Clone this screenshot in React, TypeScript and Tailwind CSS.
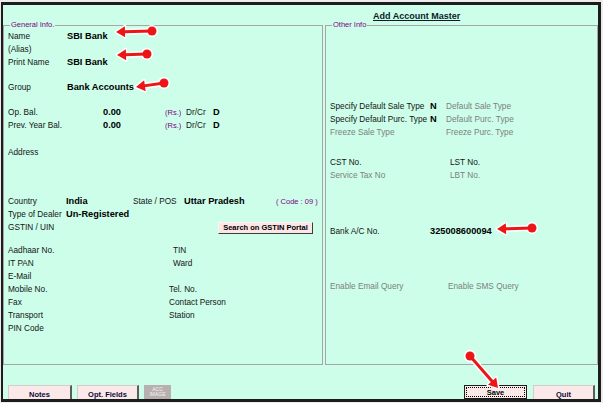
import React from 'react';

const L = 'text-[8.25px] leading-[13px] text-[#141414] whitespace-nowrap';
const G = 'text-[8.25px] leading-[13px] text-[#7e7e7e] whitespace-nowrap';
const V = 'text-[9.25px] leading-[13px] font-bold text-black whitespace-nowrap';
const P = 'text-[7.5px] leading-[13px] text-[#800080] whitespace-nowrap';

const Row: React.FC<{ className?: string; children: React.ReactNode }> = ({ className = '', children }) => (
  <div className={`flex h-[13px] items-center ${className}`}>{children}</div>
);

interface ArrowProps {
  tx: number;
  ty: number;
  cx: number;
  cy: number;
}

// red pointer arrow with white outline, tail is a dot
const Arrow: React.FC<ArrowProps> = ({ tx, ty, cx, cy }) => {
  const dx = tx - cx;
  const dy = ty - cy;
  const len = Math.hypot(dx, dy);
  const ux = dx / len;
  const uy = dy / len;
  const bx = tx - ux * 9;
  const by = ty - uy * 9;
  const px = -uy;
  const py = ux;
  const pts = `${tx},${ty} ${bx + px * 5.5},${by + py * 5.5} ${bx - px * 5.5},${by - py * 5.5}`;
  return (
    <g>
      <line x1={cx} y1={cy} x2={bx} y2={by} stroke="white" strokeWidth={6} strokeLinecap="round" />
      <polygon points={pts} fill="white" stroke="white" strokeWidth={3} strokeLinejoin="round" />
      <circle cx={cx} cy={cy} r={6} fill="white" />
      <line x1={cx} y1={cy} x2={bx + ux} y2={by + uy} stroke="#ec1616" strokeWidth={3} />
      <polygon points={pts} fill="#ec1616" />
      <circle cx={cx} cy={cy} r={4.5} fill="#ec1616" />
    </g>
  );
};

const PinkButton: React.FC<{ w: string; children: React.ReactNode }> = ({ w, children }) => (
  <div
    className={`${w} h-[14px] bg-[#fbe8e8] border-t border-l border-[#d6cccc] border-r-2 border-r-[#5c5c5c] pt-[3px] text-center text-[7.5px] font-bold leading-[11px] text-[#0b0b3c]`}
  >
    {children}
  </div>
);

const App: React.FC = () => {
  return (
    <div className="relative w-[603px] h-[403px] overflow-hidden bg-[#ececec] pt-[2px] pl-[1px] pr-[2px] pb-[1px] font-['Liberation_Sans',Arial,sans-serif]">
      <div className="h-full flex flex-col bg-[#ccfeea] border-t-[3px] border-l-[2px] border-r-[3px] border-b-[3px] border-[#1c1c1c]">
        <div className="grid grid-cols-[320px_273px] grid-rows-[15px_345px] gap-x-[2px]">
          <div />
          <div className="pl-[48px]">
            <div className="pt-[6px] text-[9px] font-bold leading-[11px] text-[#0c1c28] underline">Add Account Master</div>
          </div>

          {/* General Info */}
          <fieldset className="h-[345px] min-w-0 border border-[#a6a6a6] pl-[4px]">
            <legend className="ml-[2px] px-[1px] text-[7.5px] leading-[10px] text-[#800080]">General Info.</legend>
            <Row>
              <span className={`${L} w-[59px]`}>Name</span>
              <span className={V}>SBI Bank</span>
            </Row>
            <Row>
              <span className={L}>(Alias)</span>
            </Row>
            <Row>
              <span className={`${L} w-[59px]`}>Print Name</span>
              <span className={V}>SBI Bank</span>
            </Row>
            <Row className="mt-[12px]">
              <span className={`${L} w-[59px]`}>Group</span>
              <span className={V}>Bank Accounts</span>
            </Row>
            <Row className="mt-[12px]">
              <span className={`${L} w-[59px]`}>Op. Bal.</span>
              <span className={`${V} w-[54px] text-right`}>0.00</span>
              <span className={`${P} ml-[44px] w-[21px]`}>(Rs.)</span>
              <span className={`${L} w-[27px]`}>Dr/Cr</span>
              <span className={V}>D</span>
            </Row>
            <Row>
              <span className={`${L} w-[59px]`}>Prev. Year Bal.</span>
              <span className={`${V} w-[54px] text-right`}>0.00</span>
              <span className={`${P} ml-[44px] w-[21px]`}>(Rs.)</span>
              <span className={`${L} w-[27px]`}>Dr/Cr</span>
              <span className={V}>D</span>
            </Row>
            <Row className="mt-[14px]">
              <span className={L}>Address</span>
            </Row>
            <Row className="mt-[36px] h-[12px]">
              <span className={`${L} w-[58px]`}>Country</span>
              <span className={`${V} w-[67px]`}>India</span>
              <span className={`${L} w-[51px]`}>State / POS</span>
              <span className={`${V} w-[92px]`}>Uttar Pradesh</span>
              <span className={P}>( Code : 09 )</span>
            </Row>
            <Row>
              <span className={`${L} w-[58px]`}>Type of Dealer</span>
              <span className={V}>Un-Registered</span>
            </Row>
            <Row>
              <span className={`${L} w-[210px]`}>GSTIN / UIN</span>
              <div className="w-[95px] h-[12px] bg-[#fce6e6] border-t border-l border-[#f6f6f6] border-r border-b border-r-[#3c3c3c] border-b-[#3c3c3c] text-center text-[7.5px] font-bold leading-[10px] text-black whitespace-nowrap">
                Search on GSTIN Portal
              </div>
            </Row>
            <Row className="mt-[10px]">
              <span className={`${L} w-[165px]`}>Aadhaar No.</span>
              <span className={L}>TIN</span>
            </Row>
            <Row>
              <span className={`${L} w-[165px]`}>IT PAN</span>
              <span className={L}>Ward</span>
            </Row>
            <Row>
              <span className={L}>E-Mail</span>
            </Row>
            <Row>
              <span className={`${L} w-[161px]`}>Mobile No.</span>
              <span className={L}>Tel. No.</span>
            </Row>
            <Row>
              <span className={`${L} w-[161px]`}>Fax</span>
              <span className={L}>Contact Person</span>
            </Row>
            <Row>
              <span className={`${L} w-[161px]`}>Transport</span>
              <span className={L}>Station</span>
            </Row>
            <Row>
              <span className={L}>PIN Code</span>
            </Row>
          </fieldset>

          {/* Other Info */}
          <fieldset className="h-[345px] min-w-0 border border-[#a6a6a6] pl-[4px]">
            <legend className="ml-[2px] px-[1px] text-[7.5px] leading-[10px] text-[#800080]">Other Info</legend>
            <Row className="mt-[70px]">
              <span className={`${L} w-[100px]`}>Specify Default Sale Type</span>
              <span className={`${V} w-[16px]`}>N</span>
              <span className={G}>Default Sale Type</span>
            </Row>
            <Row>
              <span className={`${L} w-[100px]`}>Specify Default Purc. Type</span>
              <span className={`${V} w-[16px]`}>N</span>
              <span className={G}>Default Purc. Type</span>
            </Row>
            <Row>
              <span className={`${G} w-[116px]`}>Freeze Sale Type</span>
              <span className={G}>Freeze Purc. Type</span>
            </Row>
            <Row className="mt-[17px]">
              <span className={`${L} w-[120px]`}>CST No.</span>
              <span className={L}>LST No.</span>
            </Row>
            <Row>
              <span className={`${G} w-[120px]`}>Service Tax No</span>
              <span className={G}>LBT No.</span>
            </Row>
            <Row className="mt-[43px]">
              <span className={`${L} w-[100px]`}>Bank A/C No.</span>
              <span className={V}>325008600094</span>
            </Row>
            <Row className="mt-[42px]">
              <span className={`${G} w-[118px]`}>Enable Email Query</span>
              <span className={G}>Enable SMS Query</span>
            </Row>
          </fieldset>
        </div>

        {/* bottom button bar */}
        <div className="flex h-[34px] items-start gap-[5px] pt-[20px] pl-[5px] pr-[3px]">
          <PinkButton w="w-[64px]">Notes</PinkButton>
          <PinkButton w="w-[62px]">Opt. Fields</PinkButton>
          <div className="w-[27px] h-[14px] overflow-hidden bg-[#b8afaf] pt-[2px] text-center text-[5px] leading-[5px] text-[#f4f4f4]">
            ACC
            <br />
            IMAGE
          </div>
          <div className="flex-1" />
          <div className="mr-[1px] w-[63px] h-[14px] bg-[#fbe8e8] border border-[#1e1e1e] p-[1px]">
            <div className="h-full border border-dotted border-black text-center text-[7.5px] font-bold leading-[10px] text-black">
              Save
            </div>
          </div>
          <PinkButton w="w-[62px]">Quit</PinkButton>
        </div>
      </div>

      <svg className="pointer-events-none absolute inset-0" width={603} height={403} viewBox="0 0 603 403">
        <Arrow tx={116} ty={32} cx={152} cy={31} />
        <Arrow tx={117} ty={55} cx={147} cy={54} />
        <Arrow tx={136} ty={87} cx={164} cy={83} />
        <Arrow tx={497} ty={229} cx={532} cy={228} />
        <Arrow tx={498} ty={388} cx={470} cy={356} />
      </svg>
    </div>
  );
};

export default App;
